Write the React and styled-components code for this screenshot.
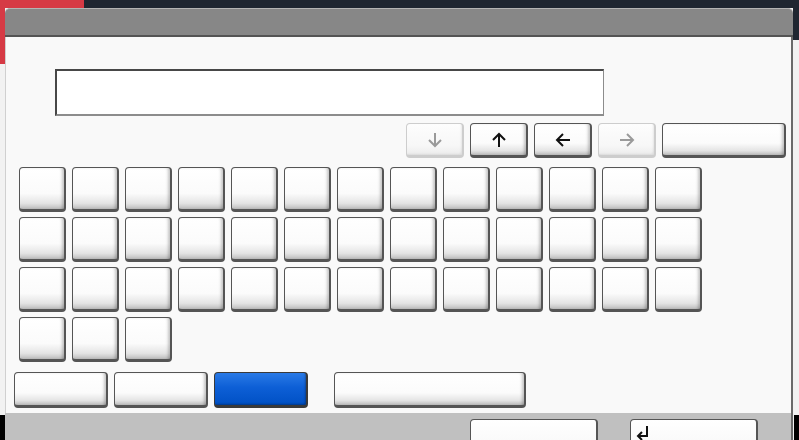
import React from 'react';
import styled, { createGlobalStyle, css } from 'styled-components';

const GlobalStyle = createGlobalStyle`
    html, body {
        margin: 0;
        padding: 0;
        font-family: "Liberation Sans", Arial, sans-serif;
    }
`;

const Page = styled.div`
    width: 799px;
    height: 440px;
    overflow: hidden;
    display: flex;
    flex-direction: column;
    padding: 8px 6px 0 5px;
    box-sizing: border-box;
    background:
        linear-gradient(#d63a45, #d63a45) 0 0 / 84px 8px no-repeat,
        linear-gradient(#d63a45, #d63a45) 0 0 / 5px 64px no-repeat,
        linear-gradient(#000, #000) 0 415px / 5px 25px no-repeat,
        linear-gradient(#000, #000) 794px 415px / 5px 25px no-repeat,
        linear-gradient(#1f2631, #1f2631) 0 0 / 100% 8px no-repeat,
        linear-gradient(#1f2631, #1f2631) 793px 0 / 6px 40px no-repeat,
        #f2f2f2;
`;

const Dialog = styled.div`
    flex: 1;
    display: flex;
    flex-direction: column;
    min-height: 0;
`;

const Header = styled.div`
    flex: none;
    height: 26px;
    background: #878787;
    border-top: 1px solid #b4b4b4;
    border-radius: 5px 5px 0 0;
    border-bottom: 2px solid #545454;
`;

const Body = styled.div`
    flex: 1;
    min-height: 0;
    display: flex;
    flex-direction: column;
    background: #f9f9f9;
    border-left: 1px solid #d0d0d0;
    border-right: 2px solid #6a6a6a;
    padding: 32px 5px 0 8px;
`;

const InputField = styled.div`
    box-sizing: border-box;
    margin-left: 41px;
    width: 549px;
    height: 47px;
    background: #fff;
    border-top: 2px solid #474747;
    border-left: 2px solid #474747;
    border-right: 1px solid #8c8c8c;
    border-bottom: 2px solid #8c8c8c;
`;

const ArrowRow = styled.div`
    display: flex;
    justify-content: flex-end;
    gap: 6px;
    margin-top: 7px;
`;

const KeyGrid = styled.div`
    display: grid;
    grid-template-columns: repeat(13, 47px);
    grid-auto-rows: 45px;
    column-gap: 6px;
    row-gap: 5px;
    margin-top: 9px;
    margin-left: 5px;
`;

const BottomRow = styled.div`
    display: flex;
    gap: 6px;
    margin-top: 10px;
`;

const Spacer = styled.div`
    width: 14px;
`;

const Key = styled.div`
    box-sizing: border-box;
    width: ${p => (p.$w ? `${p.$w}px` : 'auto')};
    height: ${p => (p.$h ? `${p.$h}px` : 'auto')};
    display: flex;
    align-items: center;
    justify-content: center;
    border-radius: 4px;
    border: 1px solid #555;
    border-right-width: 2px;
    border-bottom-width: 3px;
    background: linear-gradient(#ffffff 0%, #fbfbfb 62%, #e4e4e4 86%, #bdbdbd 100%);
    box-shadow: inset -3px 0 3px -1px rgba(0, 0, 0, 0.22);
    color: #111;

    ${p => p.$disabled && css`
        border-color: #cdcdcd;
        background: linear-gradient(#fdfdfd 0%, #f7f7f7 70%, #ececec 100%);
        box-shadow: inset -2px -2px 2px -1px rgba(0, 0, 0, 0.08);
        color: #9a9a9a;
    `}

    ${p => p.$blue && css`
        border-color: #3a3a3a;
        background: linear-gradient(#2a7ae6 0%, #0d5fd6 45%, #0050c4 100%);
        box-shadow: inset -2px -2px 2px -1px rgba(0, 0, 0, 0.3);
    `}
`;

const Footer = styled.div`
    flex: none;
    box-sizing: border-box;
    height: 27px;
    background: #c0c0c0;
    border-right: 2px solid #6a6a6a;
    display: flex;
    justify-content: flex-end;
    gap: 32px;
    padding: 6px 33px 0 0;
    overflow: hidden;
`;

const FooterButton = styled.div`
    flex: none;
    box-sizing: border-box;
    width: 128px;
    height: 36px;
    border-radius: 4px;
    border: 1px solid #555;
    border-right-width: 2px;
    background: linear-gradient(#ffffff, #f7f7f7);
    padding: 5px 0 0 4px;
`;

const Arrow = ({ dir }) => {
    const rot = { down: 180, up: 0, left: 270, right: 90 }[dir];
    return (
        <svg width="18" height="18" viewBox="0 0 18 18" style={{ transform: `rotate(${rot}deg)` }}>
            <path d="M9 16V3M3 9l6-6 6 6" fill="none" stroke="currentColor" strokeWidth="2" />
        </svg>
    );
};

const EnterIcon = () => (
    <svg width="16" height="16" viewBox="0 0 16 16">
        <path d="M12 1v10H3M7 7l-4 4 4 4" fill="none" stroke="#111" strokeWidth="2" />
    </svg>
);

export default function App() {
    const keys = Array.from({ length: 42 });

    return (
        <Page>
            <GlobalStyle />
            <Dialog>
                <Header />
                <Body>
                    <InputField />

                    <ArrowRow>
                        <Key $w={58} $h={35} $disabled><Arrow dir="down" /></Key>
                        <Key $w={58} $h={35}><Arrow dir="up" /></Key>
                        <Key $w={58} $h={35}><Arrow dir="left" /></Key>
                        <Key $w={58} $h={35} $disabled><Arrow dir="right" /></Key>
                        <Key $w={124} $h={35} />
                    </ArrowRow>

                    <KeyGrid>
                        {keys.map((_, i) => <Key key={i} />)}
                    </KeyGrid>

                    <BottomRow>
                        <Key $w={94} $h={36} />
                        <Key $w={94} $h={36} />
                        <Key $w={94} $h={36} $blue />
                        <Spacer />
                        <Key $w={192} $h={36} />
                    </BottomRow>
                </Body>
                <Footer>
                    <FooterButton />
                    <FooterButton><EnterIcon /></FooterButton>
                </Footer>
            </Dialog>
        </Page>
    );
}
